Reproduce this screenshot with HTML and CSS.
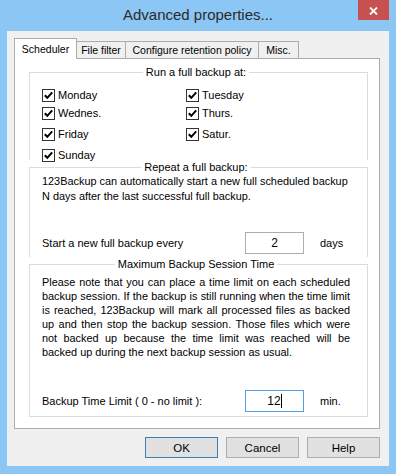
FILE: index.html
```html
<!DOCTYPE html>
<html lang="en">
<head>
    <meta charset="UTF-8">
    <title>Advanced properties...</title>
    <link rel="stylesheet" href="styles.css">
</head>
<body>
    <div class="titlebar">
        <span></span>
        <div class="title">Advanced properties...</div>
        <button class="close" title="Close">
            <svg width="9" height="8" viewBox="0 0 9 8"><path d="M1 0.5 L8 7.5 M8 0.5 L1 7.5" stroke="#fff" stroke-width="1.8"/></svg>
        </button>
    </div>

    <div class="client">
        <div class="tabs">
            <div class="tab active">Scheduler</div>
            <div class="tab">File filter</div>
            <div class="tab">Configure retention policy</div>
            <div class="tab">Misc.</div>
        </div>

        <div class="panel">
            <fieldset class="group">
                <legend>Run a full backup at:</legend>
                <div class="days">
                    <label class="check"><span class="box"><svg width="11" height="11" viewBox="0 0 11 11"><path d="M1.8 5.2 L4.3 7.8 L9.2 2.4" fill="none" stroke="#000" stroke-width="2"/></svg></span>Monday</label>
                    <label class="check"><span class="box"><svg width="11" height="11" viewBox="0 0 11 11"><path d="M1.8 5.2 L4.3 7.8 L9.2 2.4" fill="none" stroke="#000" stroke-width="2"/></svg></span>Tuesday</label>
                    <label class="check"><span class="box"><svg width="11" height="11" viewBox="0 0 11 11"><path d="M1.8 5.2 L4.3 7.8 L9.2 2.4" fill="none" stroke="#000" stroke-width="2"/></svg></span>Wednes.</label>
                    <label class="check"><span class="box"><svg width="11" height="11" viewBox="0 0 11 11"><path d="M1.8 5.2 L4.3 7.8 L9.2 2.4" fill="none" stroke="#000" stroke-width="2"/></svg></span>Thurs.</label>
                    <label class="check"><span class="box"><svg width="11" height="11" viewBox="0 0 11 11"><path d="M1.8 5.2 L4.3 7.8 L9.2 2.4" fill="none" stroke="#000" stroke-width="2"/></svg></span>Friday</label>
                    <label class="check"><span class="box"><svg width="11" height="11" viewBox="0 0 11 11"><path d="M1.8 5.2 L4.3 7.8 L9.2 2.4" fill="none" stroke="#000" stroke-width="2"/></svg></span>Satur.</label>
                    <label class="check"><span class="box"><svg width="11" height="11" viewBox="0 0 11 11"><path d="M1.8 5.2 L4.3 7.8 L9.2 2.4" fill="none" stroke="#000" stroke-width="2"/></svg></span>Sunday</label>
                </div>
            </fieldset>

            <fieldset class="group repeat">
                <legend>Repeat a full backup:</legend>
                <p class="note">123Backup can automatically start a new full scheduled backup N days after the last successful full backup.</p>
                <div class="field-row">
                    <span>Start a new full backup every</span>
                    <span class="field">2</span>
                    <span>days</span>
                </div>
            </fieldset>

            <fieldset class="group session">
                <legend>Maximum Backup Session Time</legend>
                <p class="note justify">Please note that you can place a time limit on each scheduled backup session. If the backup is still running when the time limit is reached, 123Backup will mark all processed files as backed up and then stop the backup session. Those files which were not backed up because the time limit was reached will be backed up during the next backup session as usual.</p>
                <div class="field-row">
                    <span>Backup Time Limit ( 0 - no limit ):</span>
                    <span class="field focused">12<span class="caret"></span></span>
                    <span>min.</span>
                </div>
            </fieldset>
        </div>

        <div class="buttons">
            <button class="btn default">OK</button>
            <button class="btn">Cancel</button>
            <button class="btn">Help</button>
        </div>
    </div>
</body>
</html>
```

FILE: styles.css
```css
body {
    margin: 0;
    width: 396px;
    height: 474px;
    overflow: hidden;
    background: #8cc6f5;
    font-family: "Liberation Sans", Arial, sans-serif;
    font-size: 11px;
    color: #000;
}
.titlebar {
    height: 31px;
    display: grid;
    grid-template-columns: 1fr auto 1fr;
}
.title {
    font-size: 15px;
    line-height: 30px;
    color: #2b2b2b;
}
.close {
    justify-self: end;
    width: 31px;
    height: 20px;
    margin-right: 7px;
    padding: 2px 0 0;
    border: none;
    background: #c75050;
    display: flex;
    align-items: center;
    justify-content: center;
}
.client {
    margin: 0 7px;
    height: 435px;
    box-sizing: border-box;
    padding: 7px 9px 8px 7px;
    background: #f0f0f0;
}
.tabs {
    display: grid;
    grid-template-columns: 63px 49px 133px 40px;
    align-items: start;
    height: 21px;
    margin-bottom: -1px;
    position: relative;
}
.tab {
    margin-top: 3px;
    margin-left: -1px;
    height: 17px;
    line-height: 17px;
    border: 1px solid #acacac;
    border-bottom: none;
    background: #f0f0f0;
    box-sizing: border-box;
    font-size: 10.5px;
    text-align: center;
    white-space: nowrap;
}
.tab.active {
    margin-top: 0;
    margin-left: 0;
    height: 21px;
    line-height: 20px;
    background: #fff;
    position: relative;
    z-index: 1;
}
.panel {
    background: #fff;
    border: 1px solid #acacac;
    padding: 6px 11px 11px 14px;
}
.group {
    margin: 0;
    padding: 0 17px 0 12px;
    border: 1px solid #dcdcdc;
    border-bottom: none;
    min-width: 0;
}
.group legend {
    margin: 0 auto;
    padding: 0 3px;
    line-height: 14px;
}
.group:first-child {
    padding-bottom: 1px;
}
.days {
    margin-top: 7px;
    display: grid;
    grid-template-columns: 144px auto;
    grid-template-rows: 18px 21px 21px 13px;
    align-items: start;
}
.check {
    display: flex;
    align-items: center;
    gap: 3px;
    height: 18px;
}
.box {
    width: 13px;
    height: 13px;
    box-sizing: border-box;
    border: 1px solid #333;
    background: #fff;
    display: flex;
}
.note {
    margin: 0;
    line-height: 15px;
    font-size: 10.9px;
}
.repeat {
    padding-bottom: 3px;
}
.session {
    border-bottom: 1px solid #dcdcdc;
    padding-bottom: 4px;
}
.session .note {
    margin-top: 4px;
    line-height: 14px;
}
.justify {
    text-align: justify;
}
.field-row {
    display: grid;
    grid-template-columns: 187px 59px auto;
    column-gap: 16px;
    align-items: center;
    margin-top: 28px;
}
.session .field-row {
    margin-top: 31px;
}
.field {
    height: 22px;
    box-sizing: border-box;
    border: 1px solid #abadb3;
    text-align: center;
    line-height: 20px;
    font-size: 12px;
}
.field.focused {
    border-color: #569de5;
}
.caret {
    display: inline-block;
    width: 1px;
    height: 14px;
    background: #000;
    vertical-align: -3px;
}
.buttons {
    display: flex;
    justify-content: flex-end;
    gap: 8px;
    margin-top: 8px;
}
.btn {
    width: 73px;
    height: 21px;
    padding: 0;
    border: 1px solid #adadad;
    background: #e1e1e1;
    font-family: inherit;
    font-size: 11.5px;
    color: #000;
}
.btn.default {
    border-color: #3c7fb1;
}
```
